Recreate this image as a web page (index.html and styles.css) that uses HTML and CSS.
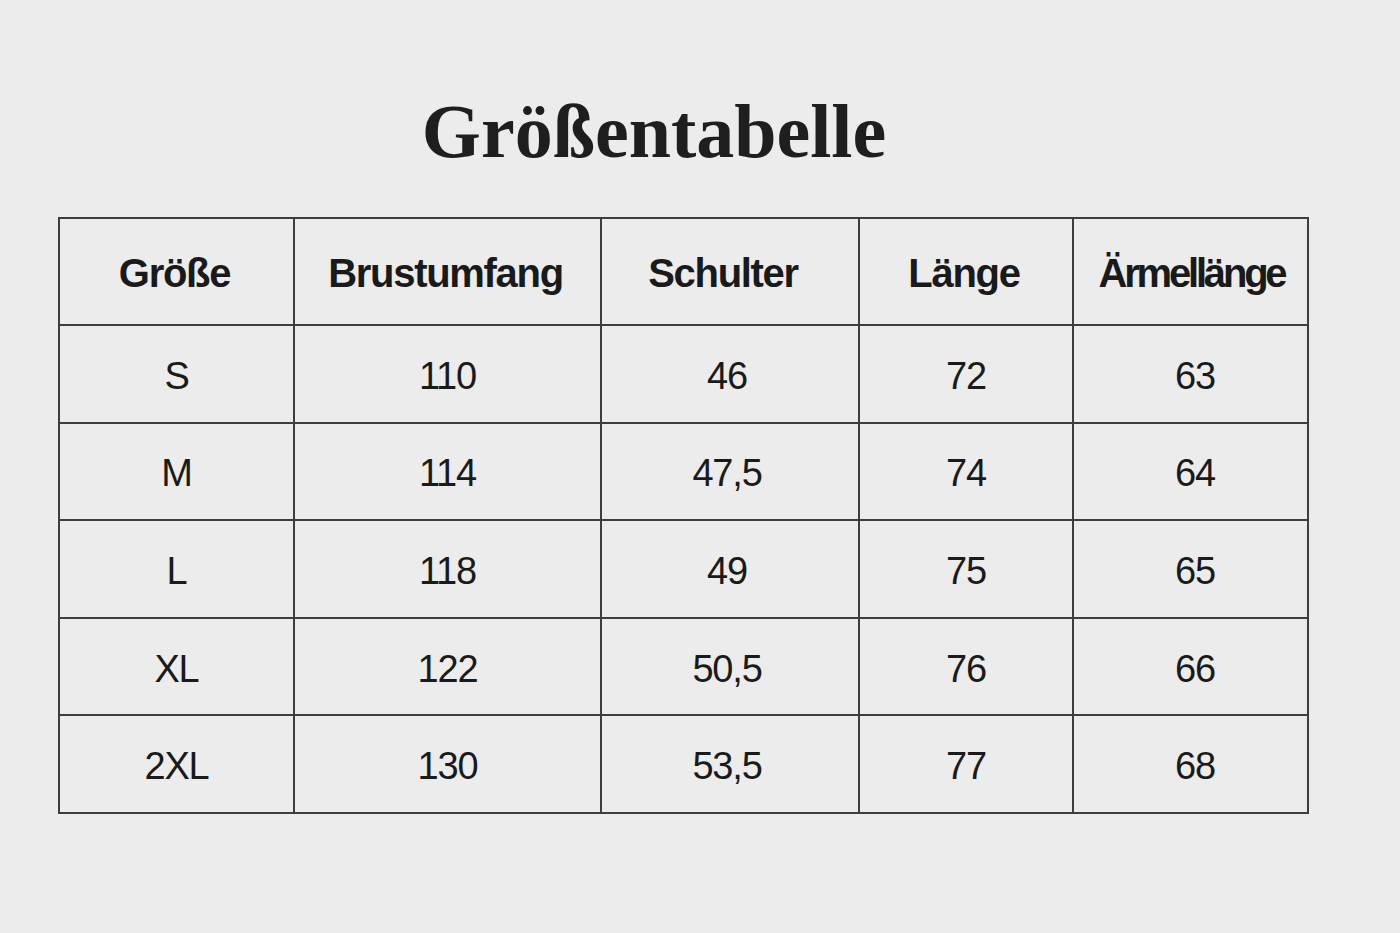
FILE: index.html
```html
<!DOCTYPE html>
<html lang="de">
<head>
<meta charset="utf-8">
<title>Größentabelle</title>
<link rel="stylesheet" href="styles.css">
</head>
<body>
<div class="page">
  <h1 class="title">Größentabelle</h1>
  <table class="sizes">
    <colgroup>
      <col class="c1"><col class="c2"><col class="c3"><col class="c4"><col class="c5">
    </colgroup>
    <thead>
      <tr class="head">
        <th>Größe</th><th>Brustumfang</th><th class="mid">Schulter</th><th>Länge</th><th class="tight">Ärmellänge</th>
      </tr>
    </thead>
    <tbody>
      <tr><td>S</td><td>110</td><td class="mid">46</td><td>72</td><td class="last">63</td></tr>
      <tr><td>M</td><td>114</td><td class="mid">47,5</td><td>74</td><td class="last">64</td></tr>
      <tr><td>L</td><td>118</td><td class="mid">49</td><td>75</td><td class="last">65</td></tr>
      <tr><td>XL</td><td>122</td><td class="mid">50,5</td><td>76</td><td class="last">66</td></tr>
      <tr><td>2XL</td><td>130</td><td class="mid">53,5</td><td>77</td><td class="last">68</td></tr>
    </tbody>
  </table>
</div>
</body>
</html>
```

FILE: styles.css
```css
html, body {
  margin: 0;
  padding: 0;
  background: #ececec;
}
body {
  width: 1400px;
  height: 933px;
  overflow: hidden;
  color: #1c1c1c;
}
.page {
  width: 1249px;
  margin-left: 58px;
}
.title {
  margin: 0;
  padding: 94px 57px 0 0;
  font-family: "Liberation Serif", "Times New Roman", serif;
  font-weight: 700;
  font-size: 76px;
  line-height: 75px;
  text-align: center;
  color: #1e1e1e;
}
.sizes {
  margin-top: 48px;
  width: 1249px;
  table-layout: fixed;
  border-collapse: collapse;
  font-family: "Liberation Sans", Arial, sans-serif;
  text-align: center;
}
.c1 { width: 235px; }
.c2 { width: 307px; }
.c3 { width: 258px; }
.c4 { width: 214px; }
.c5 { width: 235px; }
.sizes th, .sizes td {
  border: 2px solid #3d3d3d;
  vertical-align: middle;
}
.sizes th {
  padding: 4px 4px 0 0;
  font-weight: 700;
  font-size: 40px;
  letter-spacing: -1.3px;
  color: #1a1a1a;
}
.sizes th.mid {
  padding-right: 14px;
}
.sizes th.tight {
  padding: 4px 0 0 2px;
  letter-spacing: -3.2px;
}
.sizes td {
  padding: 5px 0 0 0;
  font-weight: 400;
  font-size: 38px;
  letter-spacing: -1.2px;
  color: #1a1a1a;
}
.sizes td.mid {
  padding-right: 6px;
}
.sizes td.last {
  padding-left: 9px;
}
.head { height: 107px; }
.sizes tbody tr { height: 97.6px; }
```
